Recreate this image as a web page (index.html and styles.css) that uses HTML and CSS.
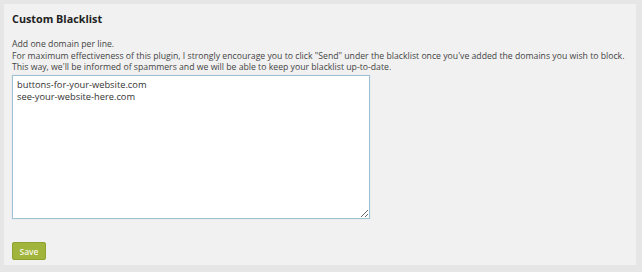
FILE: index.html
```html
<!DOCTYPE html>
<html>
<head>
<meta charset="utf-8">
<link rel="stylesheet" href="styles.css">
</head>
<body>
<div class="panel">
  <h2 class="title">Custom Blacklist</h2>
  <div class="desc">
    <p>Add one domain per line.</p>
    <p>For maximum effectiveness of this plugin, I strongly encourage you to click "Send" under the blacklist once you've added the domains you wish to block.</p>
    <p>This way, we'll be informed of spammers and we will be able to keep your blacklist up-to-date.</p>
  </div>
  <textarea class="list">buttons-for-your-website.com
see-your-website-here.com</textarea>
  <div class="actions"><button class="save">Save</button></div>
</div>
</body>
</html>
```
FILE: styles.css
```css
html, body { margin: 0; padding: 0; }
body {
  background: #e6e6e6;
  width: 642px;
  height: 272px;
  padding: 4px 6px 7px 4px;
  box-sizing: border-box;
  font-family: "Open Sans", "DejaVu Sans", sans-serif;
}
.panel {
  background: #f1f1f1;
  height: 100%;
  box-sizing: border-box;
  padding: 8px 8px 0 8px;
  display: flex;
  flex-direction: column;
  align-items: flex-start;
}
.title {
  margin: 0;
  font-size: 10.8px;
  font-weight: 700;
  color: #222;
  line-height: 14px;
}
.desc { margin-top: 13px; color: #444; font-size: 8.7px; line-height: 11.5px; }
.desc p { margin: 0; }
.list {
  margin-top: 1px;
  width: 358px;
  height: 144px;
  box-sizing: border-box;
  border: 1px solid #9ec2d3;
  box-shadow: 0 0 1px #c5dde8;
  background: #fff;
  resize: both;
  padding: 3px 4px;
  font-family: "Open Sans", "DejaVu Sans", sans-serif;
  font-size: 9.3px;
  line-height: 12px;
  color: #333;
  outline: none;
}
.actions { margin-top: 19px; }
.save {
  background: #a1b43c;
  border: 1px solid #8fa12f;
  border-radius: 2px;
  color: #f4f7e6;
  font-family: "Open Sans", "DejaVu Sans", sans-serif;
  font-size: 8.5px;
  font-weight: 600;
  width: 34px;
  height: 18px;
  padding: 0;
}
```
